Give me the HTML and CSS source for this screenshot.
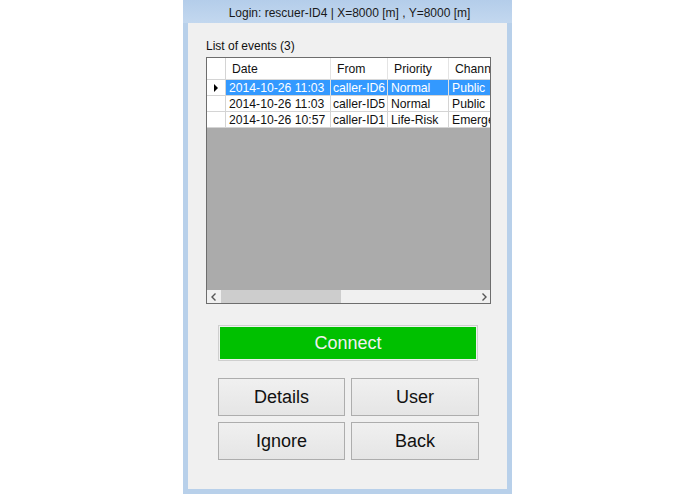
FILE: index.html
```html
<!DOCTYPE html>
<html>
<head>
<meta charset="utf-8">
<link rel="stylesheet" href="styles.css">
</head>
<body>
<div class="page">
  <div class="window">
    <div class="titlebar">Login: rescuer-ID4 | X=8000 [m] , Y=8000 [m]</div>
    <div class="client">
      <div class="label">List of events (3)</div>
      <div class="grid">
        <div class="row head">
          <div class="rh"></div>
          <div class="c c1">Date</div>
          <div class="c c2">From</div>
          <div class="c c3">Priority</div>
          <div class="c c4">Channel</div>
        </div>
        <div class="row sel">
          <div class="rh"><svg width="5" height="8" viewBox="0 0 5 8"><path d="M0 0 L4 4 L0 8 Z" fill="#000"/></svg></div>
          <div class="c c1">2014-10-26 11:03</div>
          <div class="c c2">caller-ID6</div>
          <div class="c c3">Normal</div>
          <div class="c c4">Public</div>
        </div>
        <div class="row">
          <div class="rh"></div>
          <div class="c c1">2014-10-26 11:03</div>
          <div class="c c2">caller-ID5</div>
          <div class="c c3">Normal</div>
          <div class="c c4">Public</div>
        </div>
        <div class="row">
          <div class="rh"></div>
          <div class="c c1">2014-10-26 10:57</div>
          <div class="c c2">caller-ID1</div>
          <div class="c c3">Life-Risk</div>
          <div class="c c4">Emergency</div>
        </div>
        <div class="empty"></div>
        <div class="hscroll">
          <div class="arrow"><svg width="6" height="8" viewBox="0 0 6 8"><path d="M4.5 0.5 L1 4 L4.5 7.5" fill="none" stroke="#555" stroke-width="1.4"/></svg></div>
          <div class="track"><div class="thumb"></div></div>
          <div class="arrow"><svg width="6" height="8" viewBox="0 0 6 8"><path d="M1.5 0.5 L5 4 L1.5 7.5" fill="none" stroke="#555" stroke-width="1.4"/></svg></div>
        </div>
      </div>
      <div class="connect">Connect</div>
      <div class="buttons">
        <div class="btn">Details</div>
        <div class="btn">User</div>
        <div class="btn">Ignore</div>
        <div class="btn">Back</div>
      </div>
    </div>
  </div>
</div>
</body>
</html>
```

FILE: styles.css
```css
html, body {
  margin: 0;
  padding: 0;
  background: #ffffff;
}
.page {
  padding-left: 183px;
  font-family: "Liberation Sans", Arial, sans-serif;
}
.window {
  width: 329px;
  height: 494px;
  background: #b8d0ea;
  display: flex;
  flex-direction: column;
  box-sizing: border-box;
}
.titlebar {
  height: 23px;
  line-height: 26px;
  text-align: center;
  font-size: 12px;
  color: #1a1a1a;
  background: linear-gradient(#b4cdea, #c3d8ef);
  padding-left: 4px;
}
.client {
  flex: 1;
  margin: 0 5px 5px 5px;
  background: #f0f0f0;
  display: flex;
  flex-direction: column;
  padding-left: 18px;
}
.label {
  font-size: 12px;
  color: #111;
  margin-top: 16px;
  height: 18px;
}
.grid {
  width: 285px;
  height: 247px;
  box-sizing: border-box;
  border: 1px solid #6d6d6d;
  display: flex;
  flex-direction: column;
  background: #ababab;
  overflow: hidden;
  font-size: 12.2px;
}
.row {
  display: flex;
  height: 16px;
  background: #fff;
  white-space: nowrap;
  flex: none;
}
.row.head {
  height: 22px;
}
.rh {
  width: 18px;
  flex: none;
  border-right: 1px solid #d4d4d4;
  border-bottom: 1px solid #d4d4d4;
  display: flex;
  align-items: center;
  justify-content: center;
  background: #fff;
}
.c {
  flex: none;
  box-sizing: border-box;
  padding-left: 3px;
  border-right: 1px solid #d4d4d4;
  border-bottom: 1px solid #d4d4d4;
  line-height: 16px;
  overflow: hidden;
  color: #111;
}
.head .c {
  line-height: 22px;
  padding-left: 6px;
  border-right: 1px solid #e4e4e4;
  border-bottom: 1px solid #d8d8d8;
}
.c1 { width: 105px; }
.c2 { width: 57px; padding-left: 2px; }
.c3 { width: 61px; }
.c4 { width: 50px; border-right: none; }
.head .c4 { border-right: none; }
.sel .c {
  background: #3399ff;
  color: #fff;
  border-right-color: #e0e0e0;
}
.empty {
  flex: 1;
}
.hscroll {
  height: 13px;
  background: #f0f0f0;
  display: flex;
  align-items: stretch;
  flex: none;
}
.arrow {
  width: 13px;
  display: flex;
  align-items: center;
  justify-content: center;
}
.track {
  flex: 1;
  display: flex;
  padding: 0 1px;
}
.thumb {
  width: 120px;
  background: #cdcdcd;
}
.connect {
  margin-top: 21px;
  margin-left: 12px;
  width: 260px;
  height: 36px;
  box-sizing: border-box;
  border: 1px solid #cfcfcf;
  padding: 1px;
  background: #00c000;
  background-clip: content-box;
  color: #f0f0f0;
  font-size: 18px;
  text-align: center;
  line-height: 33px;
}
.buttons {
  margin-top: 17px;
  margin-left: 12px;
  display: grid;
  grid-template-columns: 127px 128px;
  grid-auto-rows: 38px;
  column-gap: 6px;
  row-gap: 6px;
}
.btn {
  box-sizing: border-box;
  border: 1px solid #adadad;
  background: linear-gradient(#f0f0f0, #e5e5e5);
  text-align: center;
  font-size: 18px;
  line-height: 36px;
  color: #111;
}
```
